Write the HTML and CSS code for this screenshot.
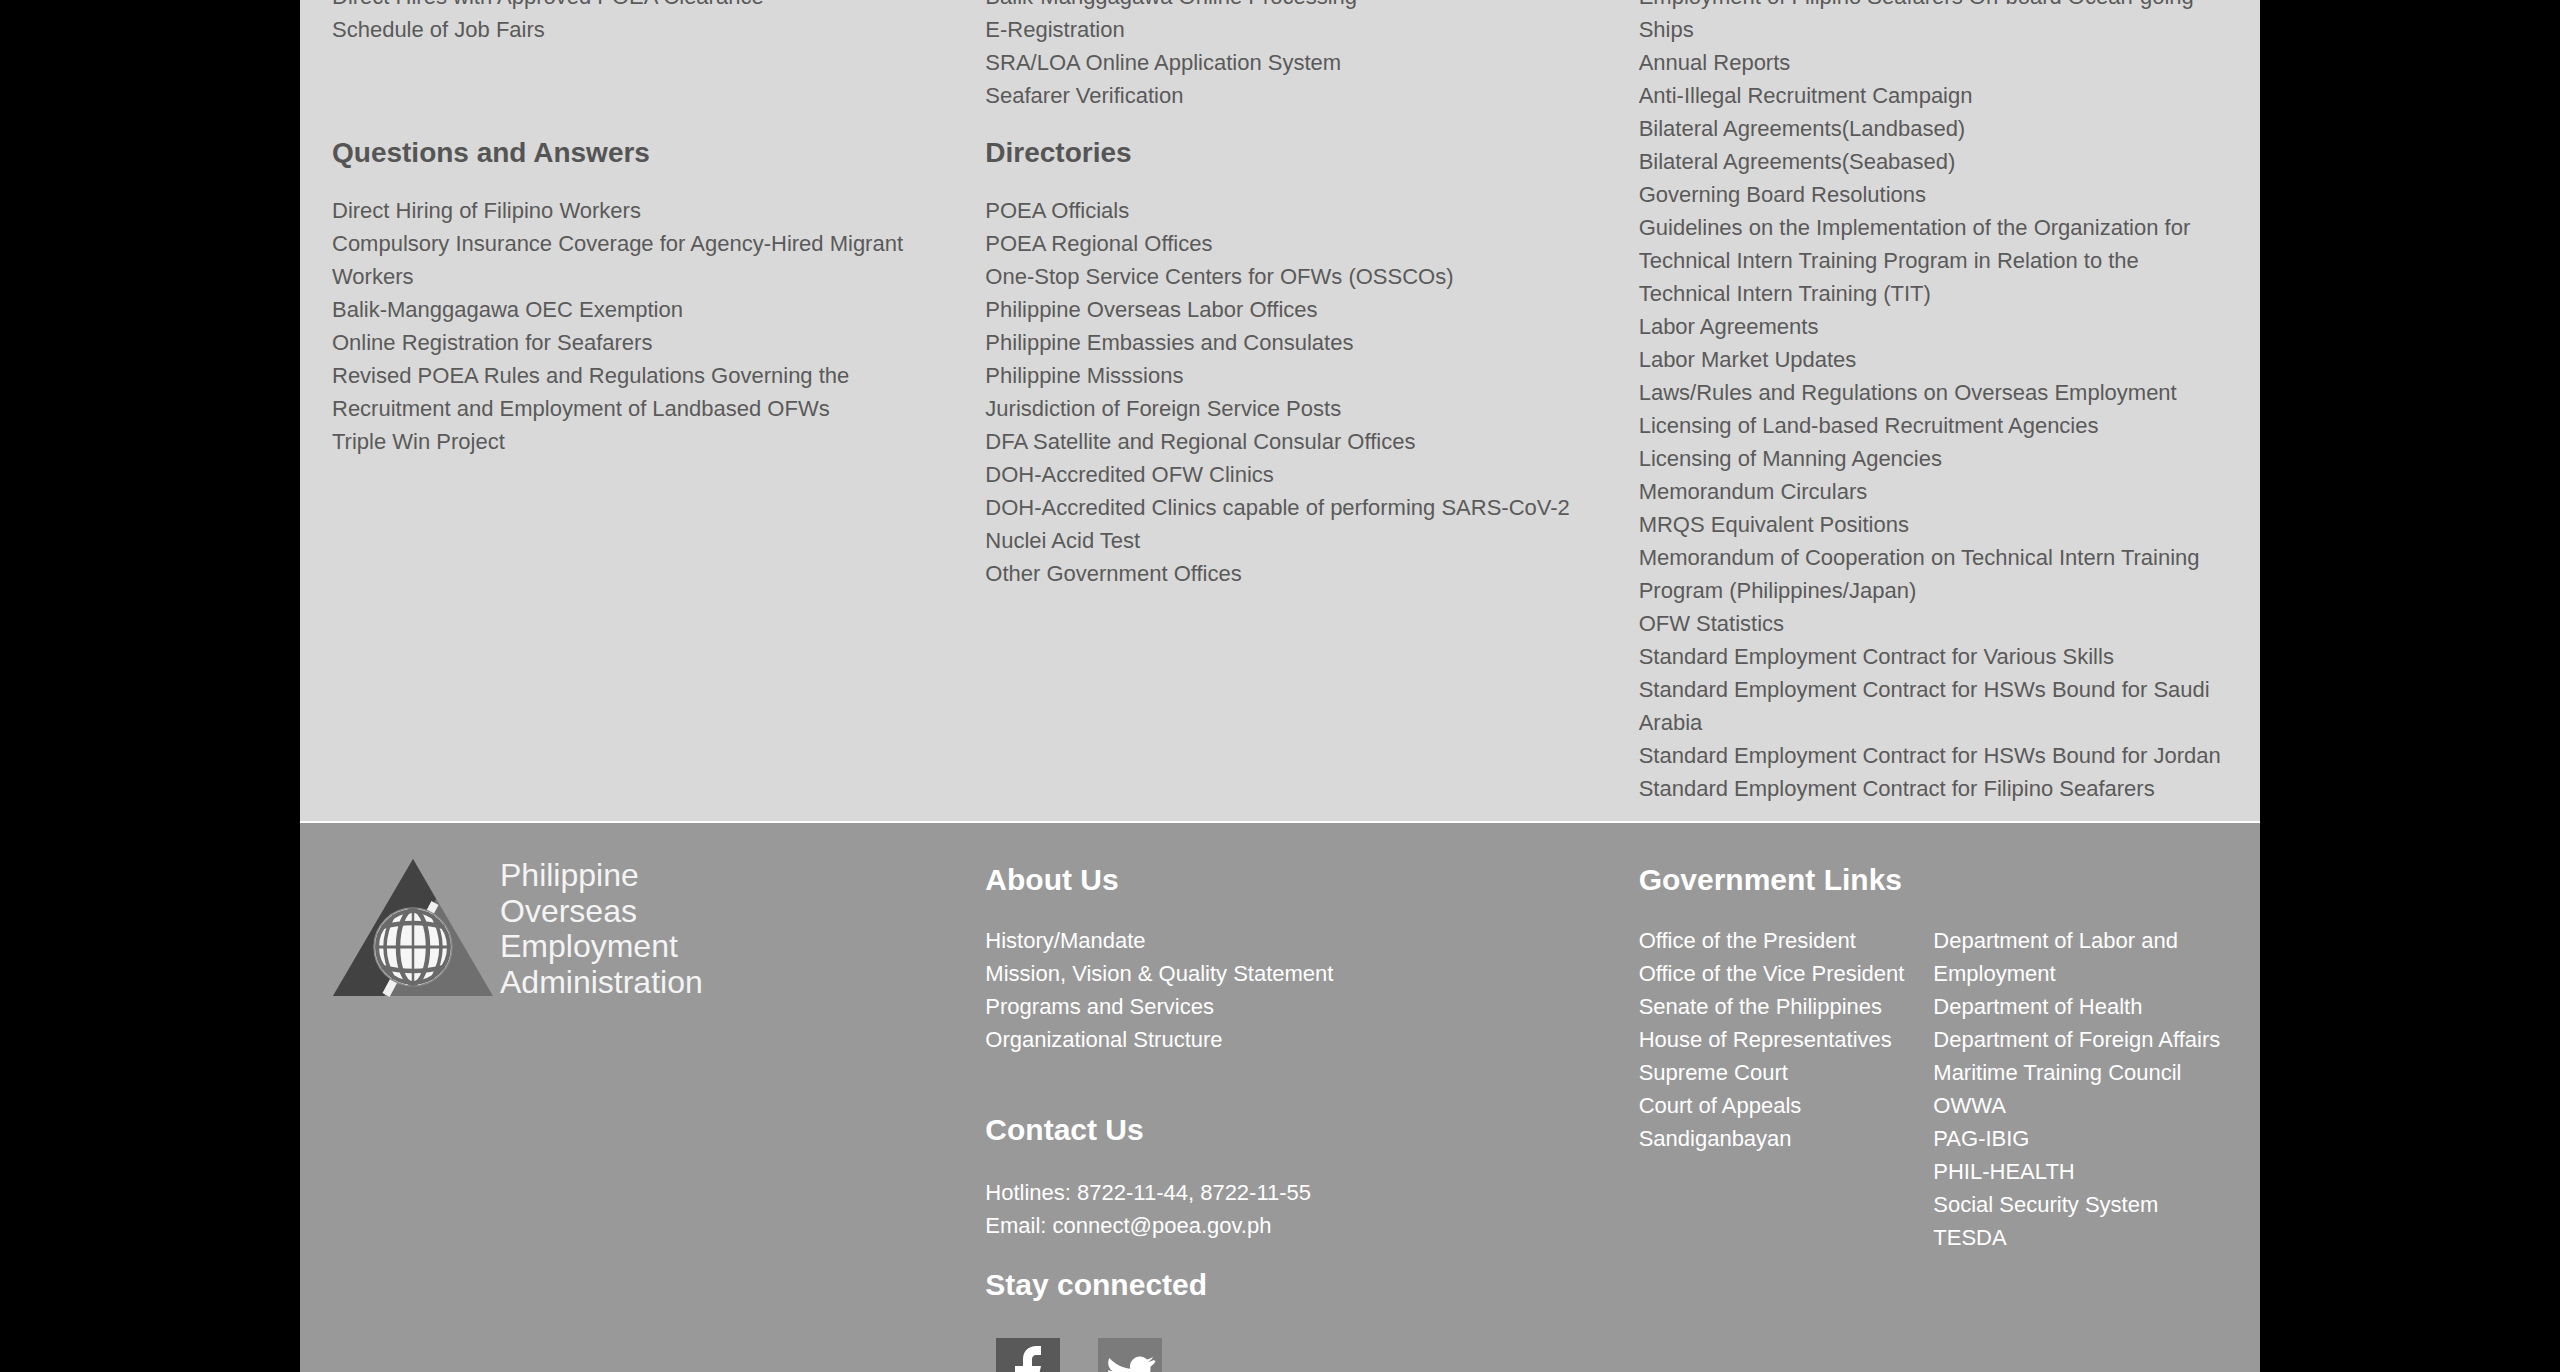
FILE: index.html
```html
<!DOCTYPE html>
<html lang="en">
<head>
<meta charset="utf-8">
<title>POEA</title>
<link rel="stylesheet" href="styles.css">
</head>
<body>
<div class="page">
  <section class="links">
    <div class="cell">
      <ul class="list">
        <li>Direct Hires with Approved POEA Clearance</li>
        <li>Schedule of Job Fairs</li>
      </ul>
    </div>
    <div class="cell">
      <ul class="list">
        <li>Balik-Manggagawa Online Processing</li>
        <li>E-Registration</li>
        <li>SRA/LOA Online Application System</li>
        <li>Seafarer Verification</li>
      </ul>
    </div>
    <div class="cell cell-tall">
      <ul class="list">
        <li>Employment of Filipino Seafarers On-board Ocean-going Ships</li>
        <li>Annual Reports</li>
        <li>Anti-Illegal Recruitment Campaign</li>
        <li>Bilateral Agreements(Landbased)</li>
        <li>Bilateral Agreements(Seabased)</li>
        <li>Governing Board Resolutions</li>
        <li>Guidelines on the Implementation of the Organization for Technical Intern Training Program in Relation to the Technical Intern Training (TIT)</li>
        <li>Labor Agreements</li>
        <li>Labor Market Updates</li>
        <li>Laws/Rules and Regulations on Overseas Employment</li>
        <li>Licensing of Land-based Recruitment Agencies</li>
        <li>Licensing of Manning Agencies</li>
        <li>Memorandum Circulars</li>
        <li>MRQS Equivalent Positions</li>
        <li>Memorandum of Cooperation on Technical Intern Training Program (Philippines/Japan)</li>
        <li>OFW Statistics</li>
        <li>Standard Employment Contract for Various Skills</li>
        <li>Standard Employment Contract for HSWs Bound for Saudi Arabia</li>
        <li>Standard Employment Contract for HSWs Bound for Jordan</li>
        <li>Standard Employment Contract for Filipino Seafarers</li>
      </ul>
    </div>
    <div class="cell">
      <h3 class="heading">Questions and Answers</h3>
      <ul class="list">
        <li>Direct Hiring of Filipino Workers</li>
        <li>Compulsory Insurance Coverage for Agency-Hired Migrant Workers</li>
        <li>Balik-Manggagawa OEC Exemption</li>
        <li>Online Registration for Seafarers</li>
        <li>Revised POEA Rules and Regulations Governing the Recruitment and Employment of Landbased OFWs</li>
        <li>Triple Win Project</li>
      </ul>
    </div>
    <div class="cell">
      <h3 class="heading">Directories</h3>
      <ul class="list">
        <li>POEA Officials</li>
        <li>POEA Regional Offices</li>
        <li>One-Stop Service Centers for OFWs (OSSCOs)</li>
        <li>Philippine Overseas Labor Offices</li>
        <li>Philippine Embassies and Consulates</li>
        <li>Philippine Misssions</li>
        <li>Jurisdiction of Foreign Service Posts</li>
        <li>DFA Satellite and Regional Consular Offices</li>
        <li>DOH-Accredited OFW Clinics</li>
        <li>DOH-Accredited Clinics capable of performing SARS-CoV-2 Nuclei Acid Test</li>
        <li>Other Government Offices</li>
      </ul>
    </div>
  </section>
  <footer class="footer">
    <div class="foot-col">
      <div class="logo">
        <svg class="logo-mark" viewBox="0 0 162 140" width="162" height="140" aria-hidden="true">
          <polygon points="81,2 1,139 161,139" fill="#6f6f6f"/>
          <polygon points="81,2 1,139 52,139 104,42" fill="#424242"/>
          <path d="M103 46 L88 74 M68 112 L54 138" stroke="#f0f0f0" stroke-width="8" fill="none"/>
          <circle cx="81" cy="90" r="39" fill="#f6f6f6" stroke="#8a8a8a" stroke-width="1.500"/>
          <g fill="none" stroke="#6a6a6a" stroke-width="4.500">
            <circle cx="81" cy="90" r="36" stroke-width="4"/>
            <ellipse cx="81" cy="90" rx="15" ry="37"/>
            <path d="M81 53 V127" stroke-width="2.500"/>
            <path d="M44 90 H118" stroke-width="3"/>
            <path d="M50 70 Q81 62 112 70"/>
            <path d="M50 110 Q81 118 112 110"/>
            <path d="M62 58 Q44 90 62 122" stroke-width="3.500"/>
            <path d="M100 58 Q118 90 100 122" stroke-width="3.500"/>
          </g>
        </svg>
        <div class="logo-text">Philippine<br>Overseas<br>Employment<br>Administration</div>
      </div>
    </div>
    <div class="foot-col">
      <h3 class="foot-heading">About Us</h3>
      <ul class="list">
        <li>History/Mandate</li>
        <li>Mission, Vision &amp; Quality Statement</li>
        <li>Programs and Services</li>
        <li>Organizational Structure</li>
      </ul>
      <h3 class="foot-heading contact">Contact Us</h3>
      <ul class="list">
        <li>Hotlines: 8722-11-44, 8722-11-55</li>
        <li>Email: connect@poea.gov.ph</li>
      </ul>
      <h3 class="foot-heading stay">Stay connected</h3>
      <div class="social">
        <span class="social-btn fb">
          <svg viewBox="0 0 64 64" width="64" height="64" aria-hidden="true"><path fill="#fff" d="M27 64V37H19V28H27V21C27 13 33 8 40 8H45V17H41C37 17 36 19 36 22V28H45L43 37H36V64Z"/></svg>
        </span>
        <span class="social-btn tw">
          <svg viewBox="0 0 64 64" width="64" height="64" aria-hidden="true"><path fill="#fff" d="M56 22c-2 1-4 1.500-6 2 2-1 4-3 5-5-2 1-4 2-6 2.500-2-2-4.500-3-7-3-5.500 0-10 4.500-10 10 0 .8.100 1.500.2 2.300C24 30 16.500 26 11.500 20c-1 1.500-1.300 3.200-1.300 5 0 3.500 1.800 6.500 4.500 8.300-1.700 0-3.200-.5-4.500-1.200 0 5 3.500 9 8 10-1.500.4-3 .4-4.500.2 1.300 4 5 6.900 9.500 7-3.500 2.700-8 4.300-12.500 4.300-.8 0-1.600 0-2.400-.1C13 57 18.500 58.500 24 58.500c18.500 0 28.500-15.300 28.500-28.500v-1.300c2-1.400 3.700-3.200 5-5.200z"/></svg>
        </span>
      </div>
    </div>
    <div class="foot-col">
      <h3 class="foot-heading">Government Links</h3>
      <div class="gov">
        <ul class="list">
          <li>Office of the President</li>
          <li>Office of the Vice President</li>
          <li>Senate of the Philippines</li>
          <li>House of Representatives</li>
          <li>Supreme Court</li>
          <li>Court of Appeals</li>
          <li>Sandiganbayan</li>
        </ul>
        <ul class="list">
          <li>Department of Labor and Employment</li>
          <li>Department of Health</li>
          <li>Department of Foreign Affairs</li>
          <li>Maritime Training Council</li>
          <li>OWWA</li>
          <li>PAG-IBIG</li>
          <li>PHIL-HEALTH</li>
          <li>Social Security System</li>
          <li>TESDA</li>
        </ul>
      </div>
    </div>
  </footer>
</div>
</body>
</html>
```
FILE: styles.css
```css
html, body {
  margin: 0;
  padding: 0;
  height: 100%;
  overflow: hidden;
  background: #000;
}
body {
  font-family: "Liberation Sans", Arial, sans-serif;
}
.page {
  width: 1960px;
  margin: -20px auto 0;
}
.links {
  display: grid;
  grid-template-columns: repeat(3, 1fr);
  grid-template-rows: auto 1fr;
  background: #d9d9d9;
  color: #5a5a5a;
  padding-bottom: 16px;
}
.cell, .foot-col {
  padding: 0 32px;
  min-width: 0;
}
.cell-tall {
  grid-column: 3;
  grid-row: 1 / span 2;
}
.list {
  list-style: none;
  margin: 0;
  padding: 0;
  font-size: 22px;
  line-height: 33px;
}
.heading {
  margin: 21px 0 21px;
  font-size: 28px;
  line-height: 40px;
  font-weight: 700;
  color: #555;
}
.footer {
  display: grid;
  grid-template-columns: repeat(3, 1fr);
  border-top: 2px solid #fff;
  background: #999;
  color: #fff;
  padding-top: 37px;
  min-height: 560px;
}
.foot-heading {
  margin: 0 0 24px;
  font-size: 30px;
  line-height: 40px;
  font-weight: 700;
  color: #fff;
}
.contact { margin-top: 54px; margin-bottom: 26px; }
.stay { margin-top: 23px; margin-bottom: 0; }
.logo {
  display: flex;
  gap: 6px;
  align-items: flex-start;
  margin-top: -3px;
}
.logo-text {
  font-size: 32px;
  line-height: 35.5px;
  color: #f4f4f4;
  padding-top: 1px;
}
.gov {
  display: grid;
  grid-template-columns: 1fr 1fr;
}
.social {
  display: flex;
  gap: 38px;
  padding: 33px 0 0 11px;
}
.social-btn {
  display: block;
  width: 64px;
  height: 64px;
}
.fb { background: #595959; }
.tw { background: #7b7b7b; }
```
